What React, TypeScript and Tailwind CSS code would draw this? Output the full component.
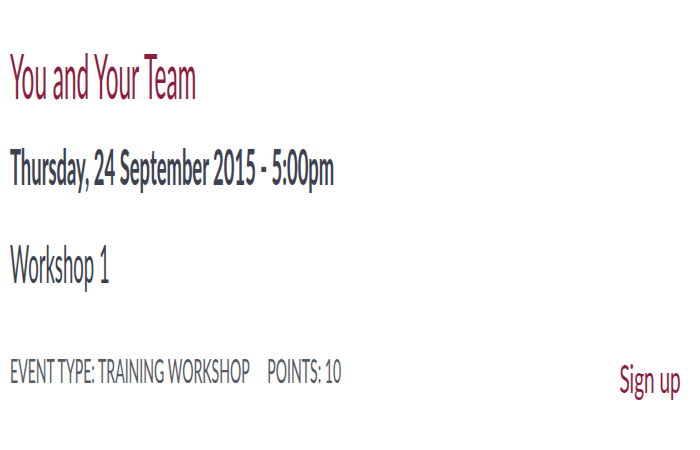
import React from "react";

type LineProps = {
  className: string;
  children: React.ReactNode;
};

// text in the shot is squeezed sideways, so each line is scaled on x
function Squeezed({ className, children }: LineProps) {
  return (
    <span className={"inline-block whitespace-nowrap leading-none " + className}>
      {children}
    </span>
  );
}

export default function App() {
  return (
    <div className="w-[700px] h-[450px] bg-white overflow-hidden font-['Lato','Liberation_Sans',sans-serif]">
      <div className="pl-[10px] pt-[45px] flex flex-col items-start">
        <Squeezed className="text-[61px] text-[#8c1d40] scale-x-[0.37] origin-left">
          You and Your Team
        </Squeezed>
        <Squeezed className="mt-[35px] text-[50px] font-bold text-[#3d4250] scale-x-[0.368] origin-left">
          Thursday, 24 September 2015 - 5:00pm
        </Squeezed>
        <Squeezed className="mt-[45px] text-[53px] text-[#3a3f4b] scale-x-[0.35] origin-left">
          Workshop 1
        </Squeezed>
      </div>
      <div className="mt-[66px] pl-[10px] pr-[19px] flex items-start justify-between">
        <div className="w-[340px] flex-none">
          <Squeezed className="text-[32px] text-[#555a63] scale-x-[0.44] origin-left">
            EVENT TYPE: TRAINING WORKSHOP<span className="ml-[40px]">POINTS: 10</span>
          </Squeezed>
        </div>
        <div className="w-[70px] flex-none flex justify-end overflow-visible">
          <Squeezed className="mt-[4px] text-[38px] text-[#8c1d40] scale-x-[0.5] origin-right">
            Sign up
          </Squeezed>
        </div>
      </div>
    </div>
  );
}
